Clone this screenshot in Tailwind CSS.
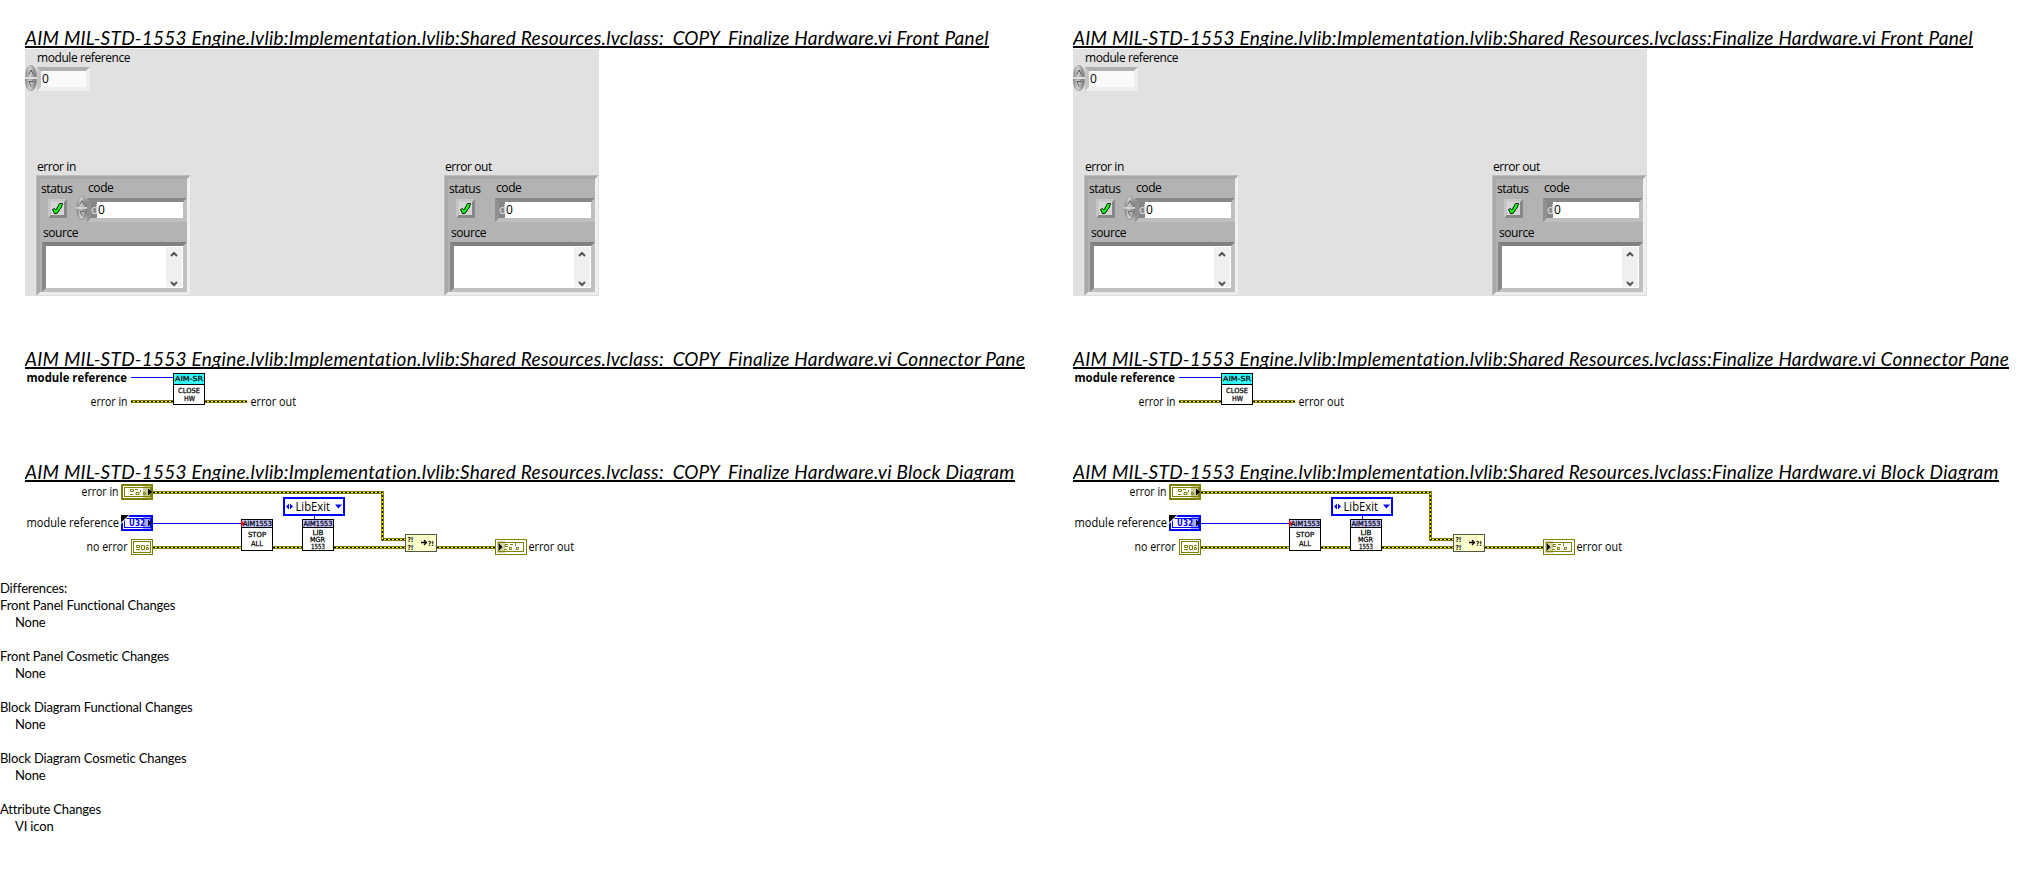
<!DOCTYPE html>
<html lang="en">
<head>
<meta charset="utf-8">
<title>VI Comparison</title>
<script src="https://cdn.jsdelivr.net/npm/@tailwindcss/browser@4"></script>
</head>
<body class="bg-white text-black w-[2033px] h-[869px] overflow-hidden">

<svg class="absolute size-0">
  <defs>
    <linearGradient id="knob" x1="0" x2="1" y1="0" y2="0">
      <stop offset="0" stop-color="#8a8a8a"/><stop offset=".4" stop-color="#d6d6d6"/><stop offset="1" stop-color="#707070"/>
    </linearGradient>
    <symbol id="spinner" viewBox="0 0 12 26">
      <path d="M0.5 12C0.5 5 3 0.5 6 0.5S11.5 5 11.5 12Z" fill="url(#knob)" stroke="#8f8f8f" stroke-width=".6"/>
      <path d="M0.5 14C0.5 21 3 25.5 6 25.5S11.5 21 11.5 14Z" fill="url(#knob)" stroke="#777" stroke-width=".6"/>
      <path d="M0 13H12" stroke="#ececec" stroke-width="1.4"/>
      <path d="M3.5 9.5L6 5L8.5 9.5" fill="none" stroke="#555" stroke-width="1"/>
      <path d="M8.5 16.5H4L6 21.5" fill="none" stroke="#555" stroke-width="1"/>
    </symbol>
    <symbol id="check" viewBox="0 0 13 13">
      <path d="M1.5 7.5L3.5 6.500L5 8L8.500 1.500L11.500 1.500L10.500 5L6 11.500L3.500 11.500Z" fill="#0f0" stroke="#000" stroke-width=".9"/>
    </symbol>
    <symbol id="connector" viewBox="25 369 560 50">
      <g font-family="Open Sans, Noto Sans, sans-serif" font-size="12">
        <text x="26.5" y="382" font-weight="700" textLength="100.5" lengthAdjust="spacingAndGlyphs">module reference</text>
        <text x="90.5" y="406" textLength="37" lengthAdjust="spacingAndGlyphs">error in</text>
        <text x="250.5" y="406" textLength="45.5" lengthAdjust="spacingAndGlyphs">error out</text>
      </g>
      <path d="M131 377.5H173" stroke="#0000ff"/>
      <g fill="none">
        <path d="M131 401.5H173M205 401.5H247" stroke="#808000" stroke-width="3"/>
        <path d="M131 401.5H173M205 401.5H247" stroke="#ffff00"/>
        <path d="M131 401.5H173M205 401.5H247" stroke="#000" stroke-dasharray="2 2"/>
      </g>
      <rect x="173.500" y="373.500" width="31" height="31" fill="#fff" stroke="#000"/>
      <rect x="174" y="374" width="30" height="10" fill="#33ffff"/>
      <path d="M174 384.500H204" stroke="#000"/>
      <g font-family="DejaVu Sans, sans-serif" font-size="7" stroke="#000" stroke-width=".25">
        <text x="175" y="381" textLength="28" lengthAdjust="spacingAndGlyphs">AIM-SR</text>
        <text x="178" y="393" textLength="22" lengthAdjust="spacingAndGlyphs">CLOSE</text>
        <text x="184" y="401" textLength="11" lengthAdjust="spacingAndGlyphs">HW</text>
      </g>
    </symbol>
    <symbol id="diagram" viewBox="25 482 560 80">
      <g fill="none">
        <path d="M153 492.500H382.500V539.500H405M153 547.500H241M273 547.500H302M334 547.500H405M437 547.500H495" stroke="#808000" stroke-width="3"/>
        <path d="M153 492.500H382.500V539.500H405M153 547.500H241M273 547.500H302M334 547.500H405M437 547.500H495" stroke="#ffff00"/>
        <path d="M153 492.500H382.500V539.500H405M153 547.500H241M273 547.500H302M334 547.500H405M437 547.500H495" stroke="#000" stroke-dasharray="2 2"/>
        <path d="M153 523.500H241M314.500 515V519" stroke="#0000ff"/>
      </g>
      <g font-family="Open Sans, Noto Sans, sans-serif" font-size="12">
        <text x="81.500" y="496" textLength="37" lengthAdjust="spacingAndGlyphs">error in</text>
        <text x="26.500" y="527" textLength="92.500" lengthAdjust="spacingAndGlyphs">module reference</text>
        <text x="86.500" y="551" textLength="41" lengthAdjust="spacingAndGlyphs">no error</text>
        <text x="528.500" y="551" textLength="45.500" lengthAdjust="spacingAndGlyphs">error out</text>
      </g>
      <!-- error in terminal -->
      <rect x="122" y="485" width="30" height="14" fill="#fff" stroke="#808000" stroke-width="2"/>
      <rect x="124.500" y="487.500" width="26" height="9" fill="#fff" stroke="#808000"/>
      <path d="M130.500 489.500h3v2h-3zM130 494.500h3M135 489.500h3M136 492.500h3v2h-3zM140.500 490v2M143.500 492.500h2v2h-2z" fill="none" stroke="#808000"/>
      <rect x="143" y="486" width="8" height="12" fill="#808000" fill-opacity=".4"/>
      <path d="M148 488.500V495.500L152 492Z" fill="#000"/>
      <!-- U32 terminal -->
      <rect x="122" y="516" width="30" height="14" fill="#fff" stroke="#0000ff" stroke-width="2"/>
      <rect x="124.500" y="518.500" width="26" height="9" fill="#fff" stroke="#0000ff"/>
      <text x="129" y="526" font-family="DejaVu Sans, sans-serif" font-size="8" font-weight="700" fill="#0000ff" textLength="16" lengthAdjust="spacingAndGlyphs">U32</text>
      <rect x="143" y="517" width="8" height="12" fill="#0000ff" fill-opacity=".35"/>
      <path d="M148 519.500V526.500L152 523Z" fill="#000"/>
      <path d="M121 524V515H130Z" fill="#fff"/><path d="M121 522.500V515H129Z" fill="#000"/>
      <!-- no error constant -->
      <rect x="131.500" y="539.500" width="21" height="15" fill="#fff" stroke="#808000"/>
      <rect x="133.500" y="541.500" width="17" height="11" fill="#fff" stroke="#808000"/>
      <path d="M136.500 545.500h3v2h-3zM136 549.500h4M141.500 545.500h3v4h-3zM146 545.500h2.500M146.500 547.500h2v2h-2z" fill="none" stroke="#808000"/>
      <!-- LibExit enum -->
      <rect x="284" y="498" width="60" height="17" fill="#fff" stroke="#0000ff" stroke-width="2"/>
      <path d="M289 503.500V509.500L286 506.500ZM290 503.500V509.500L293 506.500ZM335 504.500H342L338.500 508.500Z" fill="#0000ff"/>
      <text x="295.500" y="511" font-family="Open Sans, Noto Sans, sans-serif" font-size="12" textLength="34.500" lengthAdjust="spacingAndGlyphs">LibExit</text>
      <!-- subVIs -->
      <g fill="#fff" stroke="#000">
        <rect x="241.500" y="519.500" width="31" height="31"/>
        <rect x="302.500" y="519.500" width="31" height="31"/>
        <rect x="241.500" y="519.500" width="31" height="8" fill="#c5c5ff"/>
        <rect x="302.500" y="519.500" width="31" height="8" fill="#c5c5ff"/>
      </g>
      <path d="M241 520V527L244.500 523.500Z" fill="#ff0000"/>
      <g font-family="DejaVu Sans, sans-serif" font-size="7" stroke="#000" stroke-width=".25">
        <text x="243" y="526" textLength="29" lengthAdjust="spacingAndGlyphs">AIM1553</text>
        <text x="248" y="537" textLength="18" lengthAdjust="spacingAndGlyphs">STOP</text>
        <text x="251" y="546" textLength="12" lengthAdjust="spacingAndGlyphs">ALL</text>
        <text x="303.500" y="526" textLength="29" lengthAdjust="spacingAndGlyphs">AIM1553</text>
        <text x="312.500" y="535" textLength="11" lengthAdjust="spacingAndGlyphs">LIB</text>
        <text x="310" y="542" textLength="15" lengthAdjust="spacingAndGlyphs">MGR</text>
        <text x="311" y="549" textLength="14" lengthAdjust="spacingAndGlyphs">1553</text>
      </g>
      <!-- merge errors -->
      <rect x="405.500" y="534.500" width="31" height="17" fill="#ffffcc" stroke="#555544"/>
      <g font-family="DejaVu Sans, sans-serif" font-size="7" font-weight="700">
        <text x="407.500" y="541.500" textLength="6" lengthAdjust="spacingAndGlyphs">?!</text>
        <text x="407.500" y="549.500" textLength="6" lengthAdjust="spacingAndGlyphs">?!</text>
        <text x="428" y="545.500" textLength="6" lengthAdjust="spacingAndGlyphs">?!</text>
      </g>
      <path d="M421 542.500H426M424 540L426.500 542.500L424 545" stroke="#000" stroke-width="1.300" fill="none"/>
      <!-- error out terminal -->
      <rect x="495.500" y="539.500" width="31" height="15" fill="#fff" stroke="#808000"/>
      <rect x="498.500" y="542.500" width="25" height="9" fill="#fff" stroke="#808000"/>
      <path d="M508 544.500h-3v2h3M504 549.500h3M510 544.500h3M509.500 547.500h2v2h-2zM515.500 543v3M516.500 547.500h2v2h-2z" fill="none" stroke="#808000"/>
      <rect x="497" y="541" width="8" height="12" fill="#808000" fill-opacity=".35"/>
      <path d="M499 543.500V550.500L502.500 547Z" fill="#000"/>
    </symbol>
  </defs>
</svg>

<main class="grid grid-cols-[1048px_960px] pl-[25px] pt-[27px]">
  <article id="before" class="font-['Lato'] text-[19px] italic leading-[22px] tracking-[0.255px]">
    <h2 class="w-fit h-[21px] whitespace-pre border-b-2 border-black overflow-hidden">AIM MIL-STD-1553 Engine.lvlib:Implementation.lvlib:Shared Resources.lvclass:<i class="tracking-[-0.05px]">  COPY  </i>Finalize Hardware.vi Front Panel</h2>

    <section class="mt-px flex h-[247px] w-[574px] flex-col bg-[#e1e1e1] font-['Open_Sans'] text-[12px] leading-[16px] tracking-[-0.42px] not-italic">
      <div class="ml-[12px] mt-px h-[15px]">module reference</div>
      <div class="flex h-[26px]">
        <svg class="h-[26px] w-[12px]"><use href="#spinner"/></svg>
        <div class="mt-[2px] h-[24px] w-[53px] border-4 border-t-[#b0b0b0] border-l-[#c4c4c4] border-r-[#efefef] border-b-[#efefef] bg-[#fafafa] pl-px">0</div>
      </div>
      <div class="mt-[67px] flex grow justify-between pl-[11px]">
        <div class="flex w-[155px] flex-col">
          <div class="h-[17px] pl-px pt-px">error in</div>
          <div class="h-[121px] border-4 border-t-[#a8a8a8] border-l-[#a8a8a8] border-r-[#f0f0f0] border-b-[#ececec] bg-[#b3b3b3] outline-1 -outline-offset-1 outline-[#d0d0d0]/50">
            <div class="flex h-[17px] pl-px pt-px"><span class="mt-px w-[47px]">status</span><span>code</span></div>
            <div class="flex h-[26px]">
              <div class="ml-[8px] mt-[3px] size-[19px] border-[3px] border-t-[#c6c6c6] border-l-[#c6c6c6] border-r-[#888] border-b-[#888] bg-[#d6d6d6]"><svg class="size-[13px]"><use href="#check"/></svg></div>
              <svg class="ml-[9px] h-[24px] w-[12px]"><use href="#spinner"/></svg>
              <div class="-ml-px mt-[2px] flex h-[24px] w-[100px] shrink-0 border-4 border-t-[#888] border-l-[#909090] border-r-[#c0c0c0] border-b-[#c0c0c0] bg-white"><span class="w-[6px] bg-[#868686] text-[#e0e0e0]">d</span><span class="pl-px">0</span></div>
            </div>
            <div class="h-[20px] pl-[3px] pt-[3px]">source</div>
            <div class="ml-[2px] h-[50px] w-[145px] border-4 border-t-[#808080] border-l-[#888] border-r-[#c0c0c0] border-b-[#c0c0c0] bg-white">
              <svg class="ml-[120px] mt-px block h-[40px] w-[16px] bg-[#f0f0f0]"><path d="M5 9L8 6L11 9M5 35L8 38L11 35" fill="none" stroke="#555" stroke-width="2"/></svg>
            </div>
          </div>
        </div>
        <div class="flex w-[155px] flex-col">
          <div class="h-[17px] pl-px pt-px">error out</div>
          <div class="h-[121px] border-4 border-t-[#a8a8a8] border-l-[#a8a8a8] border-r-[#f0f0f0] border-b-[#ececec] bg-[#b3b3b3] outline-1 -outline-offset-1 outline-[#d0d0d0]/50">
            <div class="flex h-[17px] pl-px pt-px"><span class="mt-px w-[47px]">status</span><span>code</span></div>
            <div class="flex h-[26px]">
              <div class="ml-[8px] mt-[3px] size-[19px] border-[3px] border-t-[#c6c6c6] border-l-[#c6c6c6] border-r-[#888] border-b-[#888] bg-[#d6d6d6]"><svg class="size-[13px]"><use href="#check"/></svg></div>
              <div class="ml-[20px] mt-[2px] flex h-[24px] w-[100px] shrink-0 border-4 border-t-[#888] border-l-[#909090] border-r-[#c0c0c0] border-b-[#c0c0c0] bg-white"><span class="w-[6px] bg-[#868686] text-[#e0e0e0]">d</span><span class="pl-px">0</span></div>
            </div>
            <div class="h-[20px] pl-[3px] pt-[3px]">source</div>
            <div class="ml-[2px] h-[50px] w-[145px] border-4 border-t-[#808080] border-l-[#888] border-r-[#c0c0c0] border-b-[#c0c0c0] bg-white">
              <svg class="ml-[120px] mt-px block h-[40px] w-[16px] bg-[#f0f0f0]"><path d="M5 9L8 6L11 9M5 35L8 38L11 35" fill="none" stroke="#555" stroke-width="2"/></svg>
            </div>
          </div>
        </div>
      </div>
    </section>

    <h2 class="mt-[52px] w-fit h-[21px] whitespace-pre border-b-2 border-black overflow-hidden">AIM MIL-STD-1553 Engine.lvlib:Implementation.lvlib:Shared Resources.lvclass:<i class="tracking-[-0.05px]">  COPY  </i>Finalize Hardware.vi Connector Pane</h2>
    <svg class="block h-[50px] w-[560px] not-italic tracking-normal"><use href="#connector"/></svg>
    <h2 class="mt-[42px] w-fit h-[21px] whitespace-pre border-b-2 border-black overflow-hidden">AIM MIL-STD-1553 Engine.lvlib:Implementation.lvlib:Shared Resources.lvclass:<i class="tracking-[-0.05px]">  COPY  </i>Finalize Hardware.vi Block Diagram</h2>
    <svg class="block h-[80px] w-[560px] not-italic tracking-normal"><use href="#diagram"/></svg>
  </article>
</main>

<pre class="mt-[18px] font-['Lato'] text-[13px] leading-[17px] tracking-[-0.16px] [tab-size:15px]">Differences:
Front Panel Functional Changes
&#9;None

Front Panel Cosmetic Changes
&#9;None

Block Diagram Functional Changes
&#9;None

Block Diagram Cosmetic Changes
&#9;None

Attribute Changes
&#9;VI icon</pre>
<script>
  // The second column shows the same VI without the copy marker in its name.
  const before = document.getElementById('before');
  const after = before.cloneNode(true);
  after.id = 'after';
  after.querySelectorAll('h2 i').forEach(mark => mark.remove());
  before.after(after);
</script>
</body>
</html>
